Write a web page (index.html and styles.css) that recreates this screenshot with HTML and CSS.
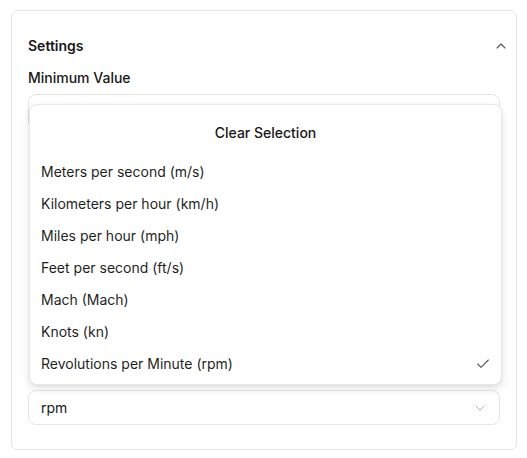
FILE: index.html
```html
<!DOCTYPE html>
<html lang="en">
<head>
<meta charset="utf-8">
<title>Settings</title>
<link rel="stylesheet" href="styles.css">
</head>
<body>
<section class="card">
  <header class="card-header">
    <h2 class="card-title">Settings</h2>
    <button class="collapse-btn" aria-label="Collapse">
      <svg viewBox="0 0 24 24" width="16" height="16"><path d="m18 15-6-6-6 6"/></svg>
    </button>
  </header>
  <div class="field">
    <label class="field-label">Minimum Value</label>
    <div class="input"></div>
  </div>
  <div class="field unit-field">
    <div class="popover" role="listbox">
      <div class="clear-row">Clear Selection</div>
      <div class="option">Meters per second (m/s)</div>
      <div class="option">Kilometers per hour (km/h)</div>
      <div class="option">Miles per hour (mph)</div>
      <div class="option">Feet per second (ft/s)</div>
      <div class="option">Mach (Mach)</div>
      <div class="option">Knots (kn)</div>
      <div class="option selected">Revolutions per Minute (rpm)
        <svg class="check" viewBox="0 0 24 24" width="16" height="16"><path d="M20 6 9 17l-5-5"/></svg>
      </div>
    </div>
    <div class="select" aria-label="Unit">
      <span>rpm</span>
      <svg class="chev" viewBox="0 0 24 24" width="16" height="16"><path d="m6 9 6 6 6-6"/></svg>
    </div>
  </div>
</section>
</body>
</html>
```

FILE: styles.css
```css
* { box-sizing: border-box; }
html, body { background: #ffffff; }
body {
  margin: 0;
  padding: 10px 10px 0 11px;
  font-family: Inter, "Liberation Sans", sans-serif;
  font-size: 14px;
  line-height: 20px;
  color: #171717;
}
.card {
  width: 506px;
  height: 440px;
  border: 1px solid #e5e5e5;
  border-radius: 6px;
  padding: 25px 16px 24px;
  display: flex;
  flex-direction: column;
  gap: 12px;
}
.card-header {
  display: flex;
  align-items: center;
  justify-content: space-between;
  height: 20px;
}
.card-title {
  margin: 0;
  font-size: 14px;
  font-weight: 600;
  line-height: 20px;
}
.collapse-btn {
  border: 0;
  background: none;
  padding: 0;
  margin-right: -9px;
  width: 16px;
  height: 16px;
  display: flex;
}
.collapse-btn svg { fill: none; stroke: #555; stroke-width: 1.6; stroke-linecap: round; stroke-linejoin: round; }
.field {
  display: flex;
  flex-direction: column;
  gap: 6px;
}
.field-label {
  font-weight: 500;
  line-height: 20px;
}
.unit-field {
  margin-top: auto;
  position: relative;
}
.input, .select {
  height: 35px;
  border: 1px solid #e5e5e5;
  border-radius: 8px;
  background: #fff;
}
.select {
  display: flex;
  align-items: center;
  justify-content: space-between;
  padding: 0 12px;
}
.chev { fill: none; stroke: #b3b3b3; stroke-width: 1.5; stroke-linecap: round; stroke-linejoin: round; margin-right: -1px; }
.popover {
  position: absolute;
  bottom: calc(100% + 5px);
  left: 1px;
  width: 473px;
  z-index: 10;
  background: #fff;
  border: 1px solid #e8e8e8;
  border-radius: 8px;
  box-shadow: 0 4px 10px rgba(0,0,0,0.10), 0 1px 3px rgba(0,0,0,0.06);
  padding: 4px;
}
.clear-row {
  height: 47px;
  display: flex;
  align-items: center;
  justify-content: center;
  font-weight: 500;
}
.option {
  height: 32px;
  display: flex;
  align-items: center;
  justify-content: space-between;
  padding: 0 8px 0 7px;
  color: #1f1f1f;
}
.check { fill: none; stroke: #555; stroke-width: 1.6; stroke-linecap: round; stroke-linejoin: round; margin-right: -2px; }
```
